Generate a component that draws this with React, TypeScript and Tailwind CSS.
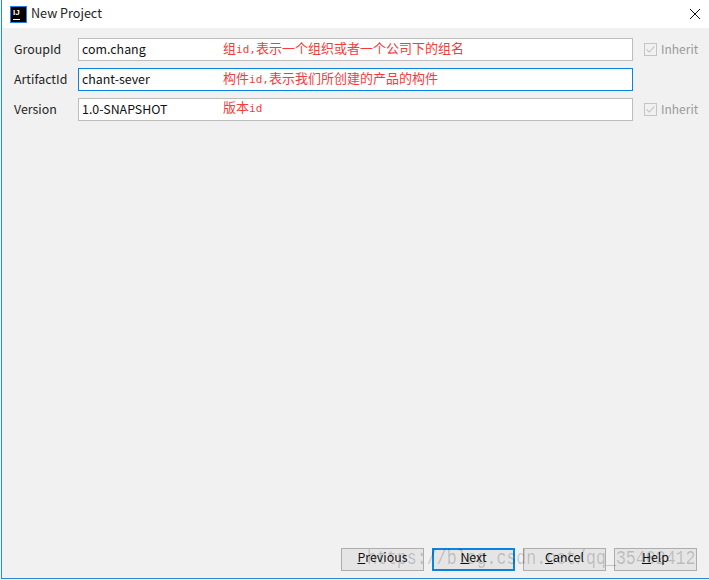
const sans = "font-['Noto_Sans_CJK_SC','Noto_Sans',sans-serif]";

const Latin = ({ children }: { children: string }) => (
  <span className="font-['DejaVu_Sans_Mono',monospace] text-[11px]">{children}</span>
);

const Field = ({
  label,
  value,
  note,
  focused,
  inherit,
  noteUp,
}: {
  label: string;
  value: string;
  note: React.ReactNode;
  focused?: boolean;
  inherit?: boolean;
  noteUp?: boolean;
}) => (
  <div className="flex h-[23px] items-center">
    <label className="w-[64px] pb-[1px] text-[12.4px] text-[#1f1f1f]">{label}</label>
    <div
      className={`flex h-[23px] w-[555px] items-center bg-white pl-[3px] text-[12.4px] text-[#111] border ${
        focused ? "border-[#0a84e0]" : "border-[#bdbdbd]"
      }`}
    >
      <span className="w-[141px] pb-[1px]">{value}</span>
      <span className={`text-[13px] leading-[15px] text-[#f33c3c] ${noteUp ? "mb-[5px]" : "mb-[3px]"}`}>{note}</span>
    </div>
    {inherit && (
      <div className="ml-[11px] flex items-center gap-[4px] text-[12px] text-[#9a9a9a]">
        <span className="flex h-[13px] w-[13px] items-center justify-center border border-[#c4c4c4]">
          <svg viewBox="0 0 13 13" className="h-[11px] w-[11px]" fill="none" stroke="#c2c2c2" strokeWidth="1.3">
            <path d="M2 6.5l3 3 6-6.5" />
          </svg>
        </span>
        <span className="pb-[1px]">Inherit</span>
      </div>
    )}
  </div>
);

const Btn = ({ first, rest, focused }: { first: string; rest: string; focused?: boolean }) => (
  <button
    className={`flex h-[23px] w-[83px] items-center justify-center bg-[#e5e5e5] pb-[4px] text-[12.4px] text-[#111] ${
      focused ? "border-2 border-[#0a84e0]" : "border border-[#adadad]"
    }`}
  >
    <span className="underline">{first}</span>
    {rest}
  </button>
);

export default function App() {
  return (
    <div className="h-[580px] w-[709px] bg-[#f4f4f4] pl-[1px]">
      <div className={`${sans} relative flex h-[579px] w-[708px] flex-col overflow-hidden border-b border-l border-[#2b88d8] bg-[#f1f1f1]`}>
        <div className="flex h-[28px] items-center bg-white pl-[8px] pr-[8px]">
          <div className="flex h-[17px] w-[17px] flex-col justify-between border border-[#2b7de0] bg-black px-[2px] pb-[2px] pt-[1px]">
            <span className="font-['Liberation_Sans',sans-serif] text-[8px] font-bold leading-[9px] text-white">IJ</span>
            <span className="h-[1px] w-[7px] bg-white" />
          </div>
          <span className="ml-[4px] pb-[1px] text-[12.6px] text-[#222]">New Project</span>
          <svg viewBox="0 0 12 12" className="ml-auto h-[12px] w-[12px]" fill="none" stroke="#111" strokeWidth="1">
            <path d="M1 1l10 10M11 1L1 11" />
          </svg>
        </div>
        <div className="flex flex-1 flex-col pl-[12px] pt-[10px]">
          <div className="flex flex-col gap-[7px]">
            <Field
              label="GroupId"
              value="com.chang"
              note={<>组<Latin>id,</Latin>表示一个组织或者一个公司下的组名</>}
              inherit
            />
            <Field
              label="ArtifactId"
              value="chant-sever"
              note={<>构件<Latin>id,</Latin>表示我们所创建的产品的构件</>}
              focused
            />
            <Field label="Version" value="1.0-SNAPSHOT" note={<>版本<Latin>id</Latin></>} inherit noteUp />
          </div>
          <div className="mt-auto mb-[7px] flex justify-end gap-[8px] pr-[12px]">
            <Btn first="P" rest="revious" />
            <Btn first="N" rest="ext" focused />
            <Btn first="C" rest="ancel" />
            <Btn first="H" rest="elp" />
          </div>
        </div>
        <span className="pointer-events-none absolute left-[365px] top-[543px] inline-block origin-left scale-x-[0.79] font-['Liberation_Mono',monospace] text-[21px] whitespace-nowrap text-[#00000030]">
          https://blog.csdn.net/qq_35402412
        </span>
      </div>
    </div>
  );
}
